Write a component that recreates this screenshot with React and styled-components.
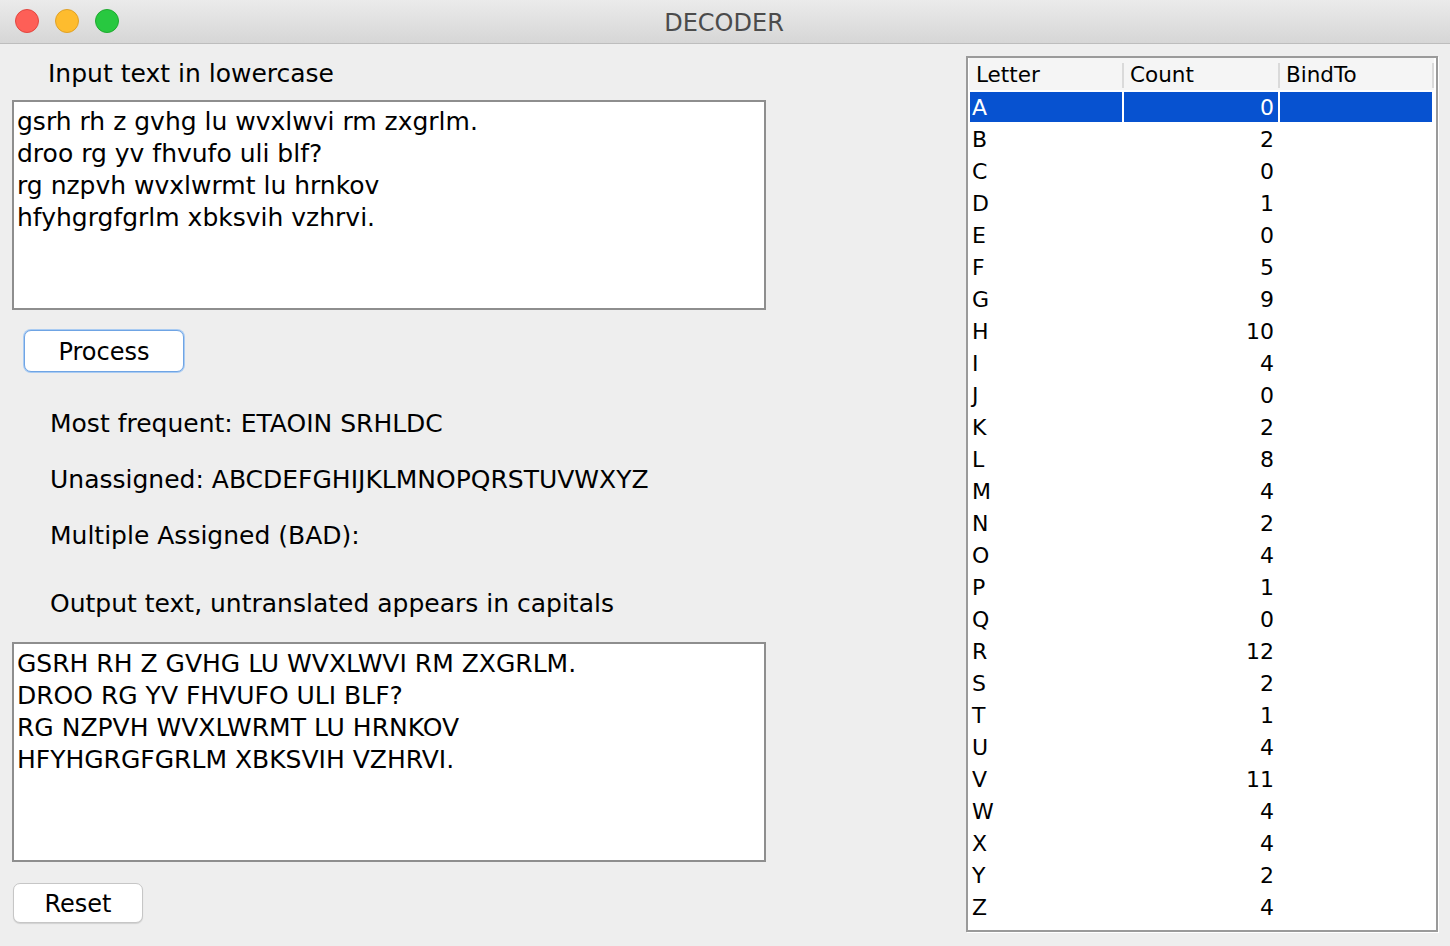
import React from "react";
import styled, { createGlobalStyle } from "styled-components";

const GlobalStyle = createGlobalStyle`
  html, body {
    margin: 0;
    padding: 0;
    background: #eeeeee;
    font-family: "DejaVu Sans", "Liberation Sans", sans-serif;
    color: #000;
  }
  * { box-sizing: border-box; }
`;

const Window = styled.div`
  width: 1450px;
  height: 946px;
  display: flex;
  flex-direction: column;
  background: #eeeeee;
  overflow: hidden;
`;

const TitleBar = styled.div`
  height: 44px;
  flex: none;
  position: relative;
  display: flex;
  align-items: center;
  justify-content: center;
  background: linear-gradient(#ebebeb, #d6d6d6);
  border-bottom: 1px solid #bdbdbd;
`;

const Lights = styled.div`
  position: absolute;
  left: 15px;
  top: 9px;
  display: flex;
  gap: 16px;
`;

const Light = styled.span`
  width: 24px;
  height: 24px;
  border-radius: 50%;
  background: ${(p) => p.$fill};
  border: 1px solid ${(p) => p.$edge};
`;

const Title = styled.div`
  font-size: 24px;
  color: #4b4b4b;
  margin-top: 3px;
  margin-left: -2px;
`;

const Body = styled.div`
  flex: 1;
  display: flex;
  justify-content: space-between;
  padding: 0 12px 14px 12px;
`;

const LeftColumn = styled.div`
  width: 754px;
  display: flex;
  flex-direction: column;
  align-items: flex-start;
`;

const Label = styled.div`
  font-size: 25px;
  line-height: 32px;
  margin-top: ${(p) => p.$top}px;
  padding-left: ${(p) => p.$indent}px;
  white-space: nowrap;
`;

const TextBox = styled.div`
  width: 754px;
  height: ${(p) => p.$height}px;
  margin-top: ${(p) => p.$top}px;
  background: #fff;
  border: 2px solid #8e8e8e;
  padding: 4px 3px 2px;
  font-size: 25px;
  line-height: 32px;
  white-space: pre;
  overflow: hidden;
`;

const Button = styled.button`
  font-family: inherit;
  font-size: 24px;
  color: #000;
  background: #fff;
  border-radius: 7px;
  cursor: pointer;
  padding: 2px 0 0;
  margin-top: ${(p) => p.$top}px;
  margin-left: ${(p) => p.$left}px;
  width: ${(p) => p.$width}px;
  height: ${(p) => p.$height}px;
  border: 1px solid ${(p) => (p.$focused ? "#6fa4e4" : "#c6c6c6")};
  box-shadow: ${(p) =>
    p.$focused ? "0 0 0 1px #a9cbf2" : "0 1px 1px rgba(0,0,0,0.12)"};
`;

const TablePanel = styled.div`
  width: 472px;
  margin-top: 12px;
  background: #fff;
  border: 2px solid #9a9a9a;
  box-shadow: 1px 1px 0 #ffffff;
  display: flex;
  flex-direction: column;
`;

const Columns = styled.div`
  display: grid;
  grid-template-columns: 152px 154px 152px;
  column-gap: 2px;
  padding-left: 2px;
`;

const HeaderRow = styled(Columns)`
  height: 32px;
  background: #f5f5f5;
  margin-left: 1px;
  margin-right: 2px;
  padding-left: 1px;
`;

const HeaderCell = styled.div`
  font-size: 21.5px;
  line-height: 34px;
  padding-left: 6px;
  position: relative;
  &::after {
    content: "";
    position: absolute;
    right: -2px;
    top: 5px;
    bottom: 4px;
    width: 2px;
    background: #dadada;
  }
`;

const Row = styled(Columns)`
  height: 32px;
  padding-top: 2px;
`;

const Cell = styled.div`
  height: 30px;
  font-size: 22px;
  line-height: 31px;
  padding: 0 4px 0 2px;
  overflow: hidden;
  text-align: ${(p) => (p.$right ? "right" : "left")};
  background: ${(p) => (p.$selected ? "#0752d0" : "transparent")};
  color: ${(p) => (p.$selected ? "#fff" : "#000")};
`;

const counts = {
  A: 0, B: 2, C: 0, D: 1, E: 0, F: 5, G: 9, H: 10, I: 4, J: 0, K: 2, L: 8, M: 4,
  N: 2, O: 4, P: 1, Q: 0, R: 12, S: 2, T: 1, U: 4, V: 11, W: 4, X: 4, Y: 2, Z: 4,
};

const inputText = `gsrh rh z gvhg lu wvxlwvi rm zxgrlm.
droo rg yv fhvufo uli blf?
rg nzpvh wvxlwrmt lu hrnkov
hfyhgrgfgrlm xbksvih vzhrvi.`;

export default function App() {
  return (
    <Window>
      <GlobalStyle />
      <TitleBar>
        <Lights>
          <Light $fill="#fe5f57" $edge="#e2463f" />
          <Light $fill="#febc2e" $edge="#e0a126" />
          <Light $fill="#28c840" $edge="#1eaa2f" />
        </Lights>
        <Title>DECODER</Title>
      </TitleBar>
      <Body>
        <LeftColumn>
          <Label $top={14} $indent={36}>Input text in lowercase</Label>
          <TextBox $top={10} $height={210}>{inputText}</TextBox>
          <Button $top={20} $left={12} $width={160} $height={42} $focused>
            Process
          </Button>
          <Label $top={36} $indent={38}>Most frequent: ETAOIN SRHLDC</Label>
          <Label $top={24} $indent={38}>Unassigned: ABCDEFGHIJKLMNOPQRSTUVWXYZ</Label>
          <Label $top={24} $indent={38}>Multiple Assigned (BAD):</Label>
          <Label $top={36} $indent={38}>Output text, untranslated appears in capitals</Label>
          <TextBox $top={22} $height={220}>{inputText.toUpperCase()}</TextBox>
          <Button $top={21} $left={1} $width={130} $height={40}>
            Reset
          </Button>
        </LeftColumn>
        <TablePanel>
          <HeaderRow>
            <HeaderCell>Letter</HeaderCell>
            <HeaderCell>Count</HeaderCell>
            <HeaderCell>BindTo</HeaderCell>
          </HeaderRow>
          {Object.entries(counts).map(([letter, count]) => {
            const selected = letter === "A";
            return (
              <Row key={letter}>
                <Cell $selected={selected}>{letter}</Cell>
                <Cell $selected={selected} $right>{count}</Cell>
                <Cell $selected={selected} />
              </Row>
            );
          })}
        </TablePanel>
      </Body>
    </Window>
  );
}
